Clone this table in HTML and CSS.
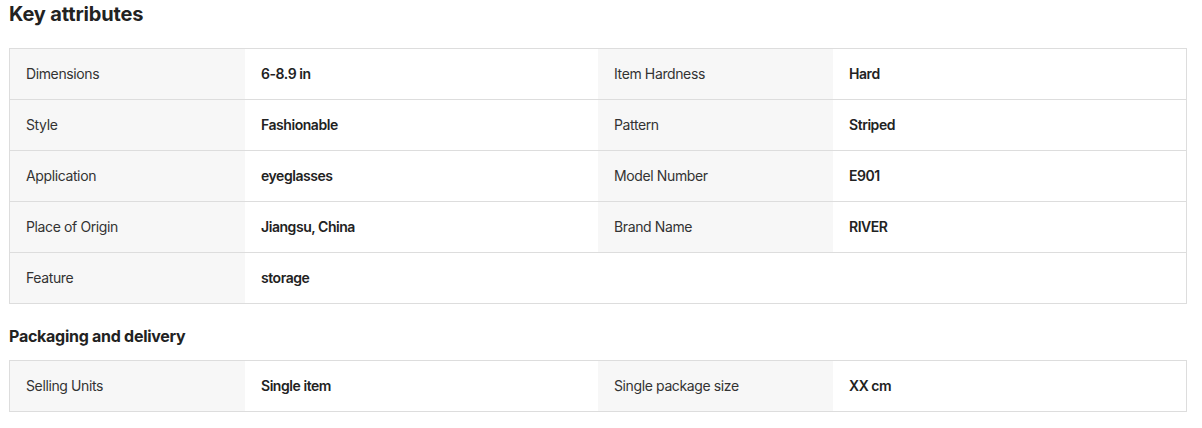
FILE: index.html
```html
<!DOCTYPE html>
<html>
<head>
<meta charset="utf-8">
<link rel="stylesheet" href="styles.css">
</head>
<body>
<div class="page">
  <h1 class="title">Key attributes</h1>
  <div class="attrs">
    <div class="row">
      <div class="label">Dimensions</div><div class="value">6-8.9 in</div>
      <div class="label">Item Hardness</div><div class="value">Hard</div>
    </div>
    <div class="row">
      <div class="label">Style</div><div class="value">Fashionable</div>
      <div class="label">Pattern</div><div class="value">Striped</div>
    </div>
    <div class="row">
      <div class="label">Application</div><div class="value">eyeglasses</div>
      <div class="label">Model Number</div><div class="value">E901</div>
    </div>
    <div class="row">
      <div class="label">Place of Origin</div><div class="value">Jiangsu, China</div>
      <div class="label">Brand Name</div><div class="value">RIVER</div>
    </div>
    <div class="row">
      <div class="label">Feature</div><div class="value">storage</div>
      <div class="empty"></div><div class="empty"></div>
    </div>
  </div>
  <h2 class="subtitle">Packaging and delivery</h2>
  <div class="attrs">
    <div class="row">
      <div class="label">Selling Units</div><div class="value">Single item</div>
      <div class="label">Single package size</div><div class="value">XX cm</div>
    </div>
  </div>
</div>
</body>
</html>
```
FILE: styles.css
```css
html, body {
  margin: 0;
  padding: 0;
  background: #fff;
}
body {
  font-family: Inter, "Noto Sans", sans-serif;
  color: #222;
}
.page {
  padding: 0 0 0 9px;
  width: 1178px;
}
.title {
  margin: 0;
  font-size: 20px;
  line-height: 28px;
  font-weight: 700;
  letter-spacing: -0.15px;
  color: #222;
}
.subtitle {
  margin: 20px 0 0;
  font-size: 16px;
  line-height: 24px;
  font-weight: 700;
  letter-spacing: -0.27px;
  color: #222;
}
.attrs {
  margin-top: 20px;
  border: 1px solid #dddddd;
}
.subtitle + .attrs {
  margin-top: 12px;
}
.row {
  display: grid;
  grid-template-columns: 235px 353px 235px 353px;
  height: 50px;
}
.row + .row {
  border-top: 1px solid #dddddd;
}
.label, .value, .empty {
  display: flex;
  align-items: center;
  padding: 0 0 2px 16px;
  font-size: 14px;
}
.label {
  background: #f7f7f7;
  color: #333;
  font-weight: 400;
  letter-spacing: -0.38px;
}
.value {
  color: #222;
  font-weight: 600;
  letter-spacing: -0.45px;
}
```
